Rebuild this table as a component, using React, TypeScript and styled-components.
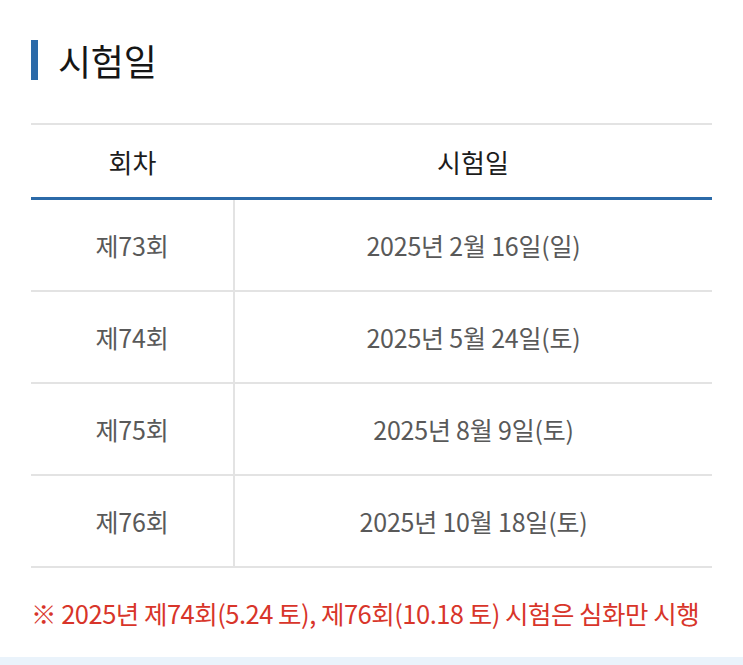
import styled, { createGlobalStyle } from "styled-components"

const GlobalStyle = createGlobalStyle`
  html, body {
    margin: 0;
    padding: 0;
    background: #ffffff;
  }
  body {
    font-family: "Noto Sans CJK KR", "Noto Sans", sans-serif;
  }
`

const Page = styled.div`
  width: 743px;
  height: 665px;
  display: flex;
  flex-direction: column;
  overflow: hidden;
`

const Content = styled.div`
  flex: 1;
  padding: 38px 31px 0 31px;
  display: flex;
  flex-direction: column;
`

const Heading = styled.h2`
  margin: 0;
  display: flex;
  align-items: center;
  gap: 20px;
  height: 44px;
  font-size: 36px;
  font-weight: 400;
  color: #161616;
  letter-spacing: -0.3px;

  &::before {
    content: "";
    display: block;
    width: 7px;
    height: 40px;
    background: #2b6aa8;
  }
`

const Table = styled.table`
  margin-top: 41px;
  width: 681px;
  border-collapse: collapse;
  border-top: 2px solid #e3e3e3;
`

const HeadCell = styled.th<{ $w?: number }>`
  width: ${({ $w }) => ($w ? `${$w}px` : "auto")};
  height: 72px;
  padding: 0;
  font-size: 26px;
  font-weight: 400;
  color: #1c1c1c;
  text-align: center;
  border-bottom: 3px solid #2b6aa8;
`

const Row = styled.tr`
  & > td {
    height: 90px;
    padding: 0;
    border-bottom: 2px solid #e3e3e3;
    text-align: center;
    font-size: 25px;
    color: #595959;
    letter-spacing: -0.2px;
  }
  & > td:first-child {
    border-right: 2px solid #e3e3e3;
  }
`

const Note = styled.p`
  margin: 26px 0 0 0;
  font-size: 25.5px;
  color: #d8352a;
  letter-spacing: -0.5px;
  white-space: nowrap;
`

const BottomBand = styled.div`
  height: 8px;
  background: #eaf3fb;
`

const ROWS = [
  ["제73회", "2025년 2월 16일(일)"],
  ["제74회", "2025년 5월 24일(토)"],
  ["제75회", "2025년 8월 9일(토)"],
  ["제76회", "2025년 10월 18일(토)"],
]

export default function App() {
  return (
    <>
      <GlobalStyle />
      <Page>
        <Content>
          <Heading>시험일</Heading>
          <Table>
            <thead>
              <tr>
                <HeadCell $w={203}>회차</HeadCell>
                <HeadCell>시험일</HeadCell>
              </tr>
            </thead>
            <tbody>
              {ROWS.map(([round, date]) => (
                <Row key={round}>
                  <td>{round}</td>
                  <td>{date}</td>
                </Row>
              ))}
            </tbody>
          </Table>
          <Note>※ 2025년 제74회(5.24 토), 제76회(10.18 토) 시험은 심화만 시행</Note>
        </Content>
        <BottomBand />
      </Page>
    </>
  )
}
